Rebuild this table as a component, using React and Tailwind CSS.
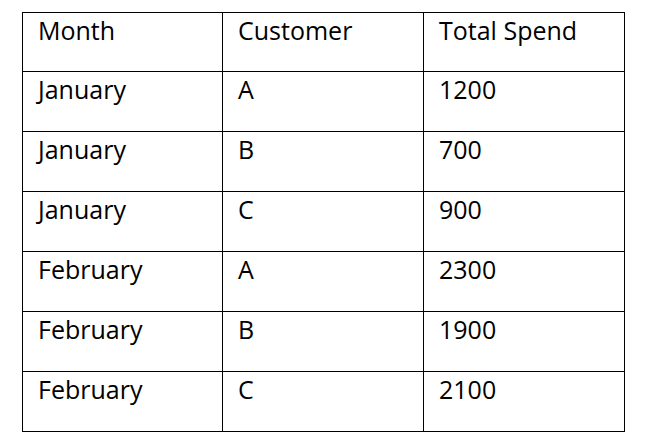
import React from 'react';

const rows = [
  ['January', 'A', '1200'],
  ['January', 'B', '700'],
  ['January', 'C', '900'],
  ['February', 'A', '2300'],
  ['February', 'B', '1900'],
  ['February', 'C', '2100'],
];

export default function App() {
  return (
    <div className="w-[647px] h-[447px] bg-white pt-[12px] pl-[22px]" style={{ fontFamily: '"Open Sans", sans-serif' }}>
      <table className="border-collapse text-[25px] leading-[25px] text-black">
        <thead>
          <tr className="h-[59px]">
            <th className="w-[200px] border border-black align-top text-left font-normal pl-[15px] pt-[5px]">Month</th>
            <th className="w-[201px] border border-black align-top text-left font-normal pl-[15px] pt-[5px]">Customer</th>
            <th className="w-[201px] border border-black align-top text-left font-normal pl-[15px] pt-[5px]">Total Spend</th>
          </tr>
        </thead>
        <tbody>
          {rows.map((r, i) => (
            <tr key={i} className="h-[60px]">
              {r.map((c, j) => (
                <td key={j} className="border border-black align-top pl-[15px] pt-[5px]">{c}</td>
              ))}
            </tr>
          ))}
        </tbody>
      </table>
    </div>
  );
}
